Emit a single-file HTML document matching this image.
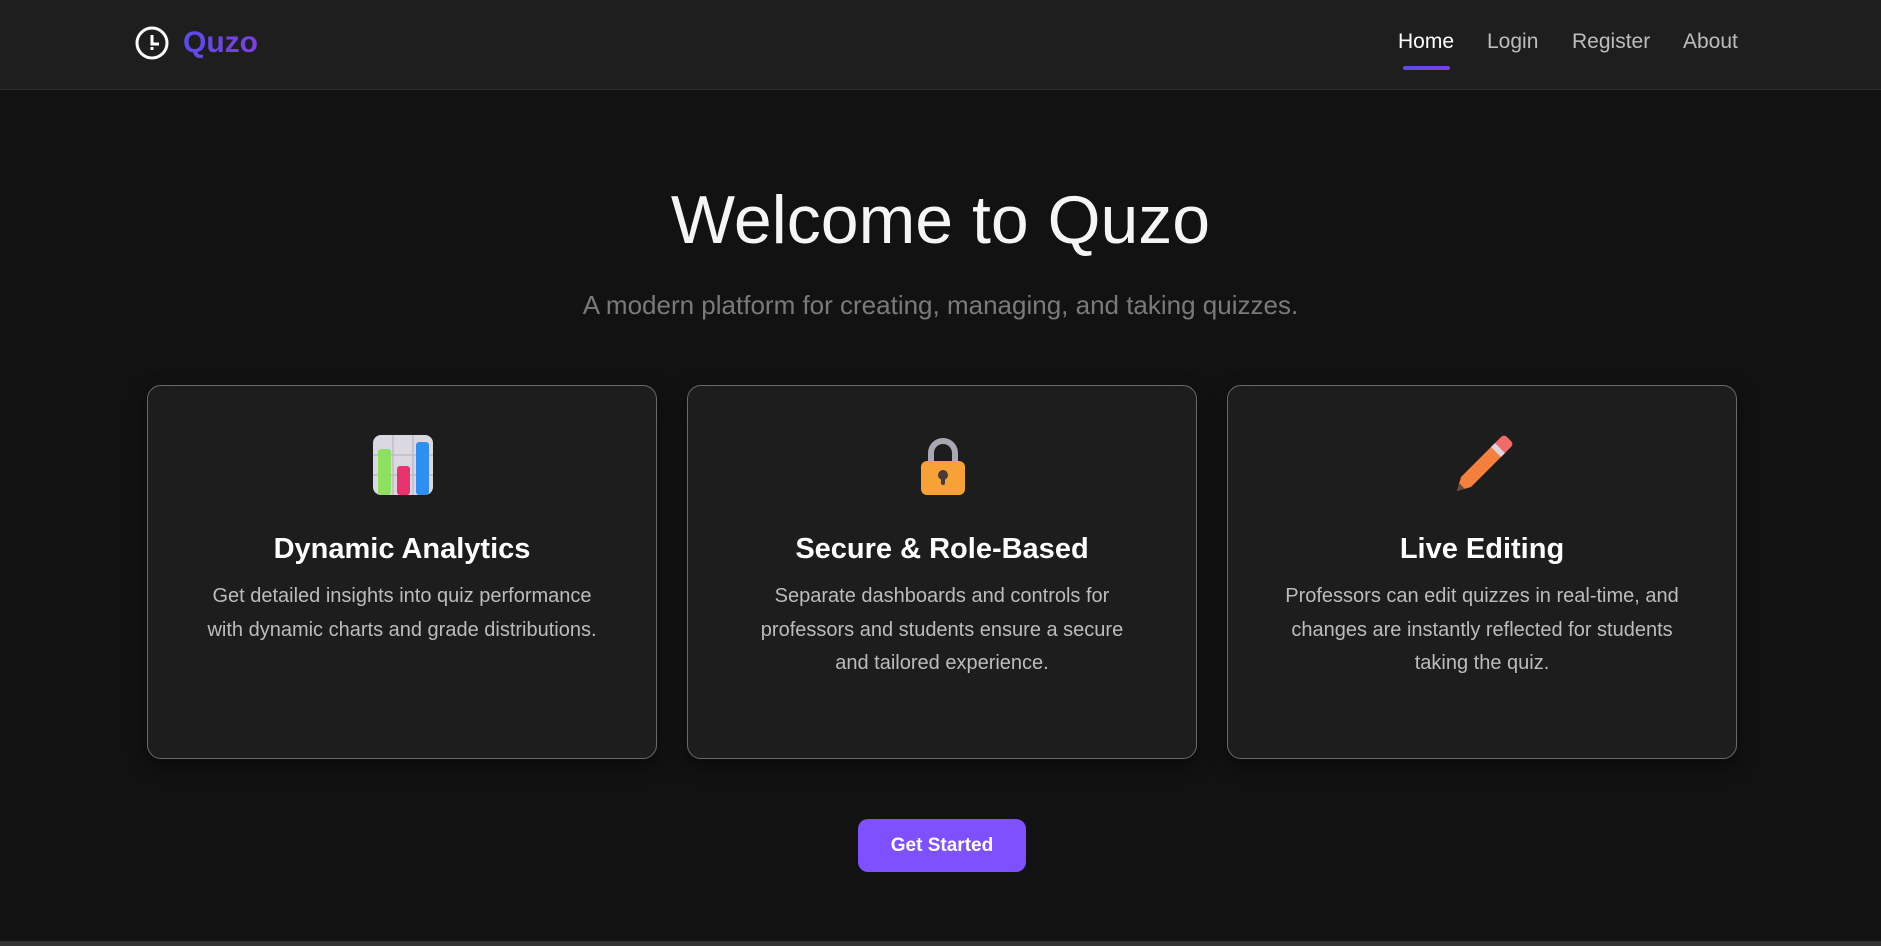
<!DOCTYPE html>
<html><head><meta charset="utf-8"><style>
*{margin:0;padding:0;box-sizing:border-box}
body{width:1881px;height:946px;background:#121212;font-family:"Liberation Sans",sans-serif;position:relative;overflow:hidden;color:#fff}
.nav{position:absolute;left:0;top:0;width:1881px;height:90px;background:#1e1e1e;border-bottom:1px solid #2e2e2e}
.logo{position:absolute;left:183px;top:26px;font-size:30px;font-weight:bold;background:linear-gradient(90deg,#5a4cea,#7c3fe2);-webkit-background-clip:text;color:transparent}
.nav a{position:absolute;top:30px;font-size:21px;color:#bdbdbd;text-decoration:none}
.ul{position:absolute;left:1403px;top:66px;width:47px;height:4px;border-radius:2px;background:linear-gradient(90deg,#5a4cea,#7c3fe2)}
h1{position:absolute;left:0;width:1881px;top:181px;text-align:center;font-weight:normal;font-size:68px;color:#f5f5f5}
.sub{position:absolute;left:0;width:1881px;top:290px;text-align:center;font-size:26px;color:#7a7a7a}
.card{position:absolute;top:385px;width:510px;height:374px;background:#1d1d1d;border:1px solid #6a6a6a;border-radius:14px;text-align:center;box-shadow:0 6px 18px rgba(0,0,0,.5)}
.card svg{position:absolute;left:225px;top:49px}
.card h3{position:absolute;top:147px;width:100%;font-size:29px;font-weight:bold;color:#fff}
.card p{position:absolute;top:194px;left:46px;right:46px;font-size:20px;line-height:33.5px;color:#bcbcbc}
.btn{position:absolute;left:858px;top:819px;width:168px;height:53px;background:#7f50ff;border-radius:10px;text-align:center;line-height:53px;font-size:19px;font-weight:bold;color:#fff}
.bot{position:absolute;left:0;top:941px;width:1881px;height:5px;background:#333}
</style></head><body>
<div class="nav">
<svg style="position:absolute;left:135px;top:26px" width="34" height="34" viewBox="0 0 34 34"><circle cx="17" cy="17" r="15" fill="none" stroke="#fff" stroke-width="3"/><path d="M17 9v9h7" fill="none" stroke="#fff" stroke-width="3"/><rect x="15.5" y="21" width="3" height="3" fill="#fff"/></svg>
<div class="logo">Quzo</div>
<a style="left:1398px;color:#fff">Home</a>
<a style="left:1487px">Login</a>
<a style="left:1572px">Register</a>
<a style="left:1683px">About</a>
<div class="ul"></div>
</div>
<h1>Welcome to Quzo</h1>
<div class="sub">A modern platform for creating, managing, and taking quizzes.</div>
<div class="card" style="left:147px">
<svg width="60" height="60" viewBox="0 0 60 60"><rect x="0" y="0" width="60" height="60" rx="8" fill="#dcd8e2"/><path d="M20 0v60M40 0v60M0 20h60M0 40h60" stroke="#c0bcc6" stroke-width="1.5"/><rect x="5" y="14" width="13" height="46" rx="3" fill="#8ee060"/><rect x="24" y="31" width="13" height="29" rx="3" fill="#e8336f"/><rect x="43" y="7" width="13" height="53" rx="3" fill="#2e8ff0"/></svg>
<h3>Dynamic Analytics</h3>
<p>Get detailed insights into quiz performance with dynamic charts and grade distributions.</p>
</div>
<div class="card" style="left:687px">
<svg width="60" height="60" viewBox="0 0 60 60"><path d="M18 28V18a12 12 0 0 1 24 0v10" fill="none" stroke="#a8a8b4" stroke-width="6"/><rect x="8" y="26" width="44" height="34" rx="6" fill="#f7a236"/><circle cx="30" cy="40" r="5" fill="#4a3a3a"/><rect x="28" y="40" width="4" height="10" rx="2" fill="#4a3a3a"/></svg>
<h3>Secure &amp; Role-Based</h3>
<p style="left:54px;right:54px">Separate dashboards and controls for professors and students ensure a secure and tailored experience.</p>
</div>
<div class="card" style="left:1227px">
<svg width="60" height="60" viewBox="0 0 60 60"><path d="M4 56l4-14 34-34 10 10-34 34z" fill="#f5803e"/><path d="M42 8l6-6a4 4 0 0 1 6 0l4 4a4 4 0 0 1 0 6l-6 6z" fill="#f26a6a"/><path d="M38 12l10 10 4-4-10-10z" fill="#e0d4e0"/><path d="M4 56l2-8 6 6z" fill="#6a4a3a"/></svg>
<h3>Live Editing</h3>
<p>Professors can edit quizzes in real-time, and changes are instantly reflected for students taking the quiz.</p>
</div>
<div class="btn">Get Started</div>
<div class="bot"></div>
</body></html>
